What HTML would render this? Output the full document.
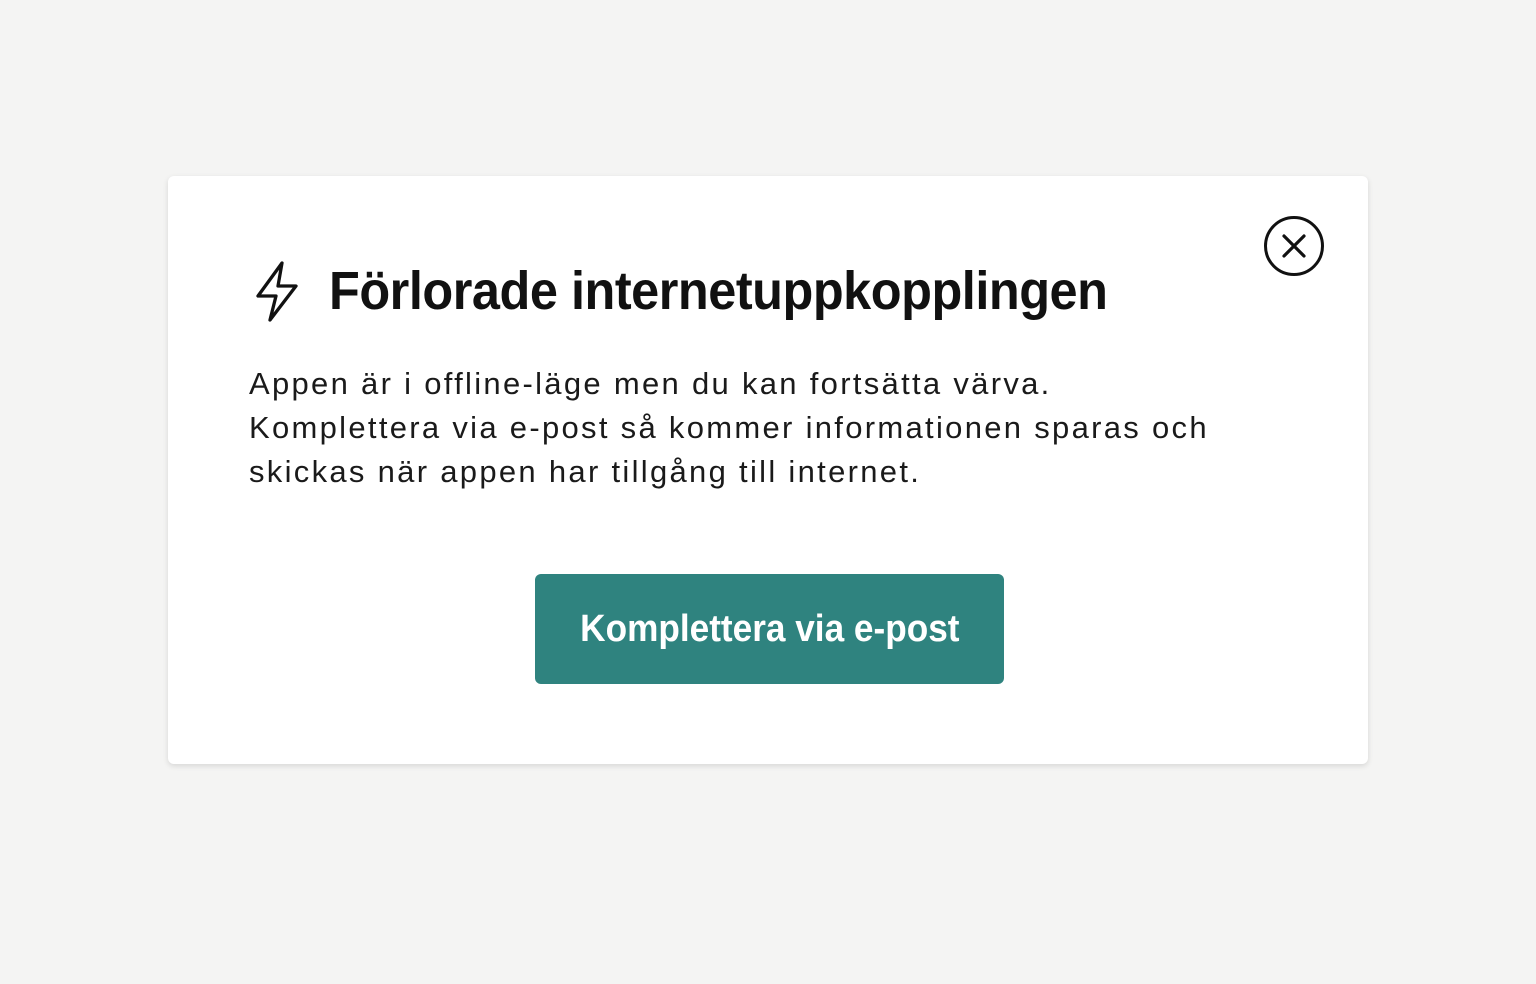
<!DOCTYPE html>
<html><head><meta charset="utf-8"><style>
html,body{margin:0;padding:0}
body{width:1536px;height:984px;background:#f4f4f3;position:relative;font-family:"Liberation Sans",sans-serif;color:#111}
.card{position:absolute;left:168px;top:176px;width:1200px;height:588px;background:#fff;border-radius:6px;box-shadow:0 2px 6px rgba(0,0,0,0.12)}
.title{position:absolute;left:329px;top:258px;font-size:54px;font-weight:bold;white-space:nowrap;transform-origin:0 0;transform:scaleX(0.934);line-height:66px;letter-spacing:-0.5px}
.body{position:absolute;left:249px;top:362px;font-size:31px;line-height:44px;white-space:nowrap;font-weight:normal;color:#1a1a1a;letter-spacing:2.3px}
.btn{position:absolute;left:535px;top:574px;width:469px;height:110px;background:#2f837f;border-radius:6px;color:#fff;font-weight:bold;font-size:38px;display:flex;align-items:center;justify-content:center}
.btn span{display:inline-block;transform:scaleX(0.926)}
</style></head><body>
<div class="card"></div>
<svg style="position:absolute;left:252px;top:258px" width="52" height="68" viewBox="0 0 52 68"><path d="M30 5 L6 38 L24 38 L18 62 L44 28 L26 28 Z" fill="none" stroke="#111" stroke-width="3.3" stroke-linejoin="round"/></svg>
<svg style="position:absolute;left:1262px;top:214px" width="64" height="64" viewBox="0 0 64 64"><circle cx="32" cy="32" r="28.5" fill="none" stroke="#111" stroke-width="3"/><path d="M22 22 L42 42 M42 22 L22 42" stroke="#111" stroke-width="3.2" stroke-linecap="round"/></svg>
<div class="title">Förlorade internetuppkopplingen</div>
<div class="body">Appen är i offline-läge men du kan fortsätta värva.<br>Komplettera via e-post så kommer informationen sparas och<br>skickas när appen har tillgång till internet.</div>
<div class="btn"><span>Komplettera via e-post</span></div>
</body></html>
